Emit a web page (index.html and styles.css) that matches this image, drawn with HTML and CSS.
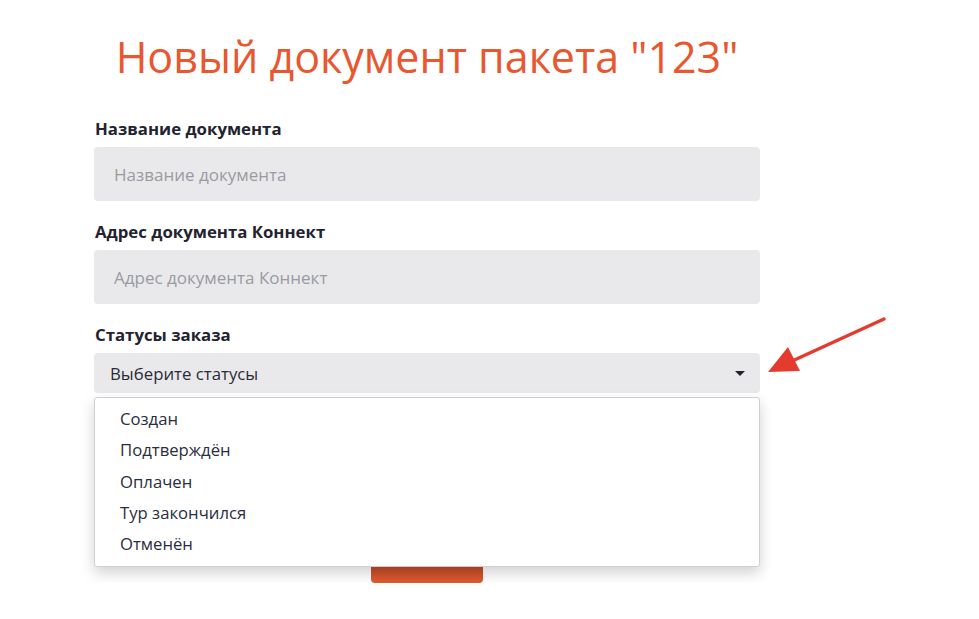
FILE: index.html
```html
<!DOCTYPE html>
<html lang="ru">
<head>
    <meta charset="UTF-8">
    <meta name="viewport" content="width=device-width, initial-scale=1.0">
    <title>Новый документ</title>
    <link rel="stylesheet" href="styles.css">
</head>
<body>
    <div class="container">
        <h1>Новый документ пакета "123"</h1>

        <label for="doc-name">Название документа</label>
        <input type="text" id="doc-name" placeholder="Название документа">

        <label for="doc-url">Адрес документа Коннект</label>
        <input type="text" id="doc-url" placeholder="Адрес документа Коннект">

        <label>Статусы заказа</label>
        <div class="select-wrap">
            <div class="select">
                <span>Выберите статусы</span>
                <span class="caret"></span>
            </div>

            <ul class="dropdown">
                <li>Создан</li>
                <li>Подтверждён</li>
                <li>Оплачен</li>
                <li>Тур закончился</li>
                <li>Отменён</li>
            </ul>

            <svg class="pointer" width="130" height="62" viewBox="0 0 130 62">
                <line x1="116" y1="4" x2="22" y2="47" stroke="#e53b2f" stroke-width="3.5" stroke-linecap="round"/>
                <polygon points="0,57 20,32 32,56" fill="#e53b2f"/>
            </svg>
        </div>

        <div class="hidden-row">
            <span class="hidden-btn"></span>
        </div>

        <div class="actions">
            <button>Сохранить</button>
        </div>
    </div>
</body>
</html>
```

FILE: styles.css
```css
body {
    font-family: 'Open Sans', sans-serif;
    background-color: #ffffff;
    margin: 0;
    padding: 0;
}

.container {
    width: 666px;
    margin-left: 94px;
    padding-top: 27px;
}

h1 {
    font-size: 43px;
    font-weight: 400;
    color: #e8572f;
    text-align: center;
    margin: 0 0 31px;
    line-height: 60px;
}

label {
    display: block;
    font-size: 16.8px;
    font-weight: 700;
    color: #23232f;
    margin: 0 0 7px 1px;
    line-height: 22px;
}

input[type="text"] {
    display: block;
    width: 100%;
    height: 54px;
    padding: 0 20px;
    font-family: inherit;
    font-size: 17px;
    background-color: #e9e9eb;
    border: none;
    border-radius: 4px;
    margin-bottom: 20px;
    box-sizing: border-box;
    outline: none;
}

input::placeholder {
    color: #9a9aa2;
}

.select-wrap {
    position: relative;
}

.select {
    display: flex;
    justify-content: space-between;
    align-items: center;
    height: 40px;
    padding: 0 15px 0 16px;
    background-color: #e9e9eb;
    border-radius: 4px;
    font-size: 16.8px;
    color: #2b2b36;
}

.caret {
    width: 0;
    height: 0;
    border-left: 5px solid transparent;
    border-right: 5px solid transparent;
    border-top: 5px solid #23232f;
}

.dropdown {
    position: absolute;
    top: 44px;
    left: 0;
    right: 0;
    z-index: 2;
    margin: 0;
    padding: 5px 0 7px;
    list-style: none;
    background-color: #ffffff;
    border: 1px solid #cfcfd3;
    border-radius: 3px;
    box-shadow: 0 6px 14px rgba(0, 0, 0, 0.18);
}

.dropdown li {
    padding: 0 25px;
    font-size: 16.7px;
    line-height: 31.3px;
    color: #2a2d3e;
}

.pointer {
    position: absolute;
    left: 674px;
    top: -38px;
}

.hidden-row {
    padding-top: 32px;
}

.hidden-btn {
    display: block;
    width: 140px;
    height: 36px;
    border-radius: 4px;
    background: linear-gradient(#a3261c, #e8602f);
}

.actions {
    display: flex;
    justify-content: center;
    padding-top: 68px;
}

button {
    width: 112px;
    height: 54px;
    padding-bottom: 16px;
    font-family: inherit;
    font-size: 16px;
    color: #ffffff;
    background: linear-gradient(#c24a28 70%, #e15b30);
    border: none;
    border-radius: 4px;
    cursor: pointer;
}
```
